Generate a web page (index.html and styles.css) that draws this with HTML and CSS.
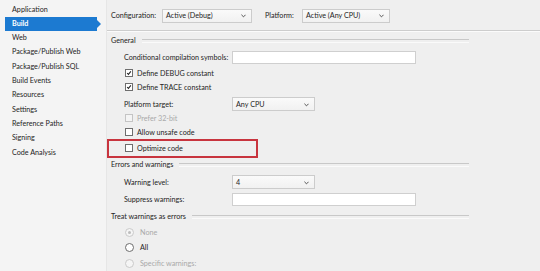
FILE: index.html
```html
<!DOCTYPE html>
<html lang="en">
<head>
    <meta charset="UTF-8">
    <title>Project Properties - Build</title>
    <link rel="stylesheet" href="styles.css">
</head>
<body>
    <!-- Left navigation -->
    <ul class="nav">
        <li>Application</li>
        <li class="active">Build</li>
        <li>Web</li>
        <li>Package/Publish Web</li>
        <li>Package/Publish SQL</li>
        <li>Build Events</li>
        <li>Resources</li>
        <li>Settings</li>
        <li>Reference Paths</li>
        <li>Signing</li>
        <li>Code Analysis</li>
    </ul>

    <div class="main">
        <div class="toolbar">
            <span class="tb-label">Configuration:</span>
            <div class="select config">Active (Debug)<svg class="chev" viewBox="0 0 6 4"><polyline points="0.5,0.5 3,3 5.5,0.5"/></svg></div>
            <span class="tb-label platform-label">Platform:</span>
            <div class="select platform">Active (Any CPU)<svg class="chev" viewBox="0 0 6 4"><polyline points="0.5,0.5 3,3 5.5,0.5"/></svg></div>
        </div>

        <div class="group-head general">General</div>

        <div class="row field cond">
            <span class="label">Conditional compilation symbols:</span>
            <div class="textbox"></div>
        </div>
        <div class="row check debug"><span class="box checked"><svg viewBox="0 0 8 8"><polyline points="1.5,4 3.2,5.8 6.5,1.8"/></svg></span>Define DEBUG constant</div>
        <div class="row check"><span class="box checked"><svg viewBox="0 0 8 8"><polyline points="1.5,4 3.2,5.8 6.5,1.8"/></svg></span>Define TRACE constant</div>
        <div class="row field platform-target">
            <span class="label">Platform target:</span>
            <div class="select narrow">Any CPU<svg class="chev" viewBox="0 0 6 4"><polyline points="0.5,0.5 3,3 5.5,0.5"/></svg></div>
        </div>
        <div class="row check disabled"><span class="box"></span>Prefer 32-bit</div>
        <div class="row check"><span class="box"></span>Allow unsafe code</div>
        <div class="highlight">
            <div class="row check"><span class="box"></span>Optimize code</div>
        </div>

        <div class="group-head errors">Errors and warnings</div>

        <div class="row field warn-level">
            <span class="label">Warning level:</span>
            <div class="select narrow">4<svg class="chev" viewBox="0 0 6 4"><polyline points="0.5,0.5 3,3 5.5,0.5"/></svg></div>
        </div>
        <div class="row field suppress">
            <span class="label">Suppress warnings:</span>
            <div class="textbox"></div>
        </div>

        <div class="group-head treat">Treat warnings as errors</div>

        <div class="row radio disabled none"><span class="dot selected"></span>None</div>
        <div class="row radio all"><span class="dot"></span>All</div>
        <div class="row radio disabled specific"><span class="dot"></span>Specific warnings:</div>
    </div>
</body>
</html>
```

FILE: styles.css
```css
* {
    margin: 0;
    padding: 0;
    box-sizing: border-box;
}

body {
    font-family: Lato, 'Open Sans', sans-serif;
    font-size: 7.2px;
    color: #1e1e1e;
    background: #efefef;
    display: flex;
    width: 540px;
    height: 271px;
    overflow: hidden;
}

/* Left navigation */
.nav {
    list-style: none;
    width: 107px;
    flex-shrink: 0;
    padding: 2.6px 0 0 5px;
    background: #f4f4f4;
    border-right: 1px solid #e6e6e6;
}

.nav li {
    height: 14.3px;
    line-height: 14.3px;
    padding-left: 7px;
    width: 92px;
    position: relative;
    white-space: nowrap;
}

.nav li.active {
    background: #1c7ad1;
    color: #fff;
    font-weight: bold;
}

.nav li.active::after {
    content: '';
    position: absolute;
    right: -4px;
    top: 3px;
    border-left: 4px solid #1c7ad1;
    border-top: 4px solid transparent;
    border-bottom: 4px solid transparent;
}

/* Main property page */
.main {
    flex: 1;
    display: flex;
    flex-direction: column;
}

.toolbar {
    height: 31px;
    display: flex;
    align-items: center;
    padding: 1px 0 0 4px;
    border-bottom: 1px solid #cdcdcd;
    box-shadow: 0 1px 0 #fbfbfb;
}

.tb-label {
    width: 51px;
}

.platform-label {
    margin-left: 13px;
    width: 37px;
}

.select {
    height: 14px;
    border: 1px solid #cccccc;
    background: linear-gradient(#fafafa, #f1f1f1);
    display: flex;
    align-items: center;
    padding-left: 3px;
    position: relative;
}

.select.config {
    width: 90px;
}

.select.platform {
    width: 88px;
}

.select.narrow {
    width: 83px;
}

.chev {
    position: absolute;
    right: 5px;
    top: 4.5px;
    width: 5px;
    height: 4px;
    fill: none;
    stroke: #444;
    stroke-width: 1.1;
}

/* Group headers with a rule */
.group-head {
    margin-left: 4px;
    width: 358px;
    display: flex;
    align-items: center;
    gap: 6px;
}

.group-head::after {
    content: '';
    flex: 1;
    height: 2px;
    border-top: 1px solid #c8c8c8;
    border-bottom: 1px solid #fafafa;
    margin-top: 1px;
}

.general {
    height: 16px;
    margin-top: 1px;
}

.errors {
    height: 13px;
}

.treat {
    height: 13px;
    margin-top: 4px;
}

/* Rows */
.row {
    height: 14px;
    display: flex;
    align-items: center;
    padding-left: 17px;
    white-space: nowrap;
}

.field .label {
    width: 108px;
}

.textbox {
    width: 184px;
    height: 13px;
    background: #fff;
    border: 1px solid #cfcfcf;
}

.cond { margin-top: 2px; }
.debug { margin-top: 2px; }
.platform-target { margin-top: 3px; }
.warn-level { margin-top: 4px; }
.suppress { margin-top: 3px; }

.check .box {
    width: 8px;
    height: 8px;
    border: 1px solid #6e6e6e;
    background: #fff;
    margin: 0 4px 0 1px;
    display: inline-flex;
}

.box svg {
    width: 100%;
    height: 100%;
    fill: none;
    stroke: #222;
    stroke-width: 1.4;
}

.disabled {
    color: #a9a9a9;
}

.disabled .box {
    border-color: #c4c4c4;
    background: #f4f4f4;
}

.highlight {
    width: 151px;
    border: 2px solid #c8343e;
    padding-bottom: 1px;
}

.highlight .row {
    padding-left: 15px;
}

.radio .dot {
    width: 9px;
    height: 9px;
    border: 1px solid #6e6e6e;
    border-radius: 50%;
    background: #fff;
    margin: 0 6px 0 1px;
    position: relative;
}

.radio.disabled .dot {
    border-color: #cacaca;
    background: #f5f5f5;
}

.dot.selected::after {
    content: '';
    position: absolute;
    left: 2px;
    top: 2px;
    width: 3px;
    height: 3px;
    border-radius: 50%;
    background: #bdbdbd;
}

.none { margin-top: 2px; }
.all { margin-top: 1px; }
.specific { margin-top: 2px; }
```
